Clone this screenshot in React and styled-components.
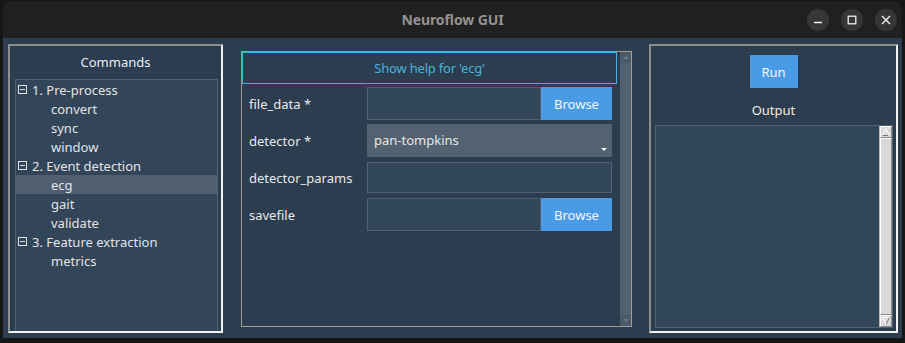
import React from 'react';
import styled, { createGlobalStyle } from 'styled-components';

const Global = createGlobalStyle`
  html, body {
    margin: 0;
    padding: 0;
    background: #161616;
    font-family: 'Noto Sans', 'Open Sans', sans-serif;
  }
`;

const Desktop = styled.div`
  width: 905px;
  height: 343px;
  padding: 1px 3px 0 3px;
  box-sizing: border-box;
  overflow: hidden;
`;

const Window = styled.div`
  width: 899px;
  border-radius: 9px 9px 0 0;
  overflow: hidden;
  background: #1f1f1f;
`;

const TitleBar = styled.div`
  position: relative;
  height: 37px;
  display: flex;
  align-items: center;
  justify-content: center;
  background: #202020;
  color: #939393;
  font-weight: 700;
  font-size: 14px;
  letter-spacing: -0.1px;
`;

const Controls = styled.div`
  position: absolute;
  right: 5px;
  top: 8px;
  display: flex;
  gap: 12px;
`;

const CtlButton = styled.div`
  width: 22px;
  height: 22px;
  border-radius: 50%;
  background: #363636;
  display: flex;
  align-items: center;
  justify-content: center;
`;

const Body = styled.div`
  height: 300px;
  background: #2b3d4f;
  display: flex;
  align-items: flex-start;
  padding: 6px 0 0 5px;
  box-sizing: border-box;
`;

const SidePanel = styled.div`
  width: ${(p) => p.$w}px;
  height: 289px;
  box-sizing: border-box;
  border: 2px solid;
  border-color: #8e8e8e #f2f2f2 #f2f2f2 #8e8e8e;
  display: flex;
  flex-direction: column;
  align-items: ${(p) => (p.$center ? 'center' : 'stretch')};
  margin-right: ${(p) => p.$mr || 0}px;
`;

const PanelTitle = styled.div`
  color: #ececec;
  font-size: 13px;
  text-align: center;
  height: 33px;
  line-height: 33px;
`;

const TreeBox = styled.div`
  flex: 1;
  margin: 0 3px 0 5px;
  background: #324559;
  border: 1px solid #4f6173;
  border-bottom: none;
`;

const TreeRow = styled.div`
  height: 19px;
  display: flex;
  align-items: center;
  padding-left: ${(p) => (p.$child ? 35 : 2)}px;
  background: ${(p) => (p.$selected ? '#4f5f6f' : 'transparent')};
  color: #e4e4e4;
  font-size: 13px;
  white-space: nowrap;
`;

const Expander = styled.span`
  width: 7px;
  height: 7px;
  border: 1px solid #e0e0e0;
  position: relative;
  margin-right: 5px;
  &::after {
    content: '';
    position: absolute;
    left: 1px;
    right: 1px;
    top: 3px;
    height: 1px;
    background: #e0e0e0;
  }
`;

const MiddlePanel = styled.div`
  width: 391px;
  height: 276px;
  margin-top: 7px;
  margin-right: 17px;
  box-sizing: border-box;
  border: 1px solid #a39d93;
  display: flex;
`;

const FormArea = styled.div`
  flex: 1;
  display: flex;
  flex-direction: column;
`;

const HelpButton = styled.div`
  height: 32px;
  margin-right: 3px;
  box-sizing: border-box;
  border: 1px solid #3fb2dc;
  display: flex;
  align-items: center;
  justify-content: center;
  color: #4cb3da;
  font-size: 13px;
  letter-spacing: -0.2px;
`;

const FormRow = styled.div`
  display: flex;
  align-items: center;
  height: ${(p) => p.$h || 33}px;
  margin-top: ${(p) => p.$mt}px;
  padding-left: 7px;
`;

const Label = styled.div`
  width: 118px;
  color: #e9e9e9;
  font-size: 13px;
`;

const Entry = styled.div`
  width: ${(p) => p.$w}px;
  height: 100%;
  box-sizing: border-box;
  background: #32465a;
  border: 1px solid #4f6173;
`;

const BlueButton = styled.div`
  width: ${(p) => p.$w}px;
  height: ${(p) => p.$h || 33}px;
  margin-top: ${(p) => p.$mt || 0}px;
  background: #4a9be6;
  color: #f2f6fb;
  font-size: 13px;
  display: flex;
  align-items: center;
  justify-content: center;
`;

const Combo = styled.div`
  position: relative;
  width: 245px;
  height: 100%;
  background: #536271;
  color: #e6e6e6;
  font-size: 13px;
  display: flex;
  align-items: center;
  padding-left: 7px;
  padding-bottom: 2px;
  box-sizing: border-box;
  &::after {
    content: '';
    position: absolute;
    right: 5px;
    bottom: 6px;
    border-left: 3px solid transparent;
    border-right: 3px solid transparent;
    border-top: 3px solid #f0f0f0;
  }
`;

const DarkScroll = styled.div`
  width: 11px;
  background: #526171;
  display: flex;
  flex-direction: column;
  justify-content: space-between;
`;

const DarkArrow = styled.div`
  height: 11px;
  background: #4b5a69;
  display: flex;
  align-items: center;
  justify-content: center;
  &::after {
    content: '';
    border-left: 3px solid transparent;
    border-right: 3px solid transparent;
    ${(p) => (p.$down ? 'border-top' : 'border-bottom')}: 3px solid #6a7988;
  }
`;

const OutputLabel = styled.div`
  color: #ececec;
  font-size: 13px;
  margin-top: 12px;
  height: 25px;
  line-height: 20px;
`;

const OutputBox = styled.div`
  align-self: stretch;
  flex: 1;
  margin: 0 3px 3px 4px;
  display: flex;
  border: 1px solid #4f6173;
  background: #32465a;
`;

const OutputText = styled.div`
  flex: 1;
`;

const LightScroll = styled.div`
  width: 12px;
  background: #c8c8c8;
  display: flex;
  flex-direction: column;
  border-left: 1px solid #b8b8b8;
`;

const Bevel = styled.div`
  box-sizing: border-box;
  background: #d9d9d9;
  border-top: 1px solid #ffffff;
  border-left: 1px solid #ffffff;
  border-right: 1px solid #8a8a8a;
  border-bottom: 1px solid #8a8a8a;
  display: flex;
  align-items: center;
  justify-content: center;
  height: ${(p) => (p.$grow ? 'auto' : '12px')};
  flex: ${(p) => (p.$grow ? 1 : 'none')};
`;

const tree = [
  { label: '1. Pre-process', group: true },
  { label: 'convert' },
  { label: 'sync' },
  { label: 'window' },
  { label: '2. Event detection', group: true },
  { label: 'ecg', selected: true },
  { label: 'gait' },
  { label: 'validate' },
  { label: '3. Feature extraction', group: true },
  { label: 'metrics' },
];

export default function App() {
  return (
    <>
      <Global />
      <Desktop>
        <Window>
          <TitleBar>
            Neuroflow GUI
            <Controls>
              <CtlButton>
                <svg width="10" height="10" viewBox="0 0 10 10">
                  <path d="M1 7.5h8" stroke="#f0f0f0" strokeWidth="1.4" />
                </svg>
              </CtlButton>
              <CtlButton>
                <svg width="10" height="10" viewBox="0 0 10 10">
                  <rect x="1.2" y="1.2" width="7.6" height="7.6" fill="none" stroke="#f0f0f0" strokeWidth="1.3" />
                </svg>
              </CtlButton>
              <CtlButton>
                <svg width="10" height="10" viewBox="0 0 10 10">
                  <path d="M1 1l8 8M9 1l-8 8" stroke="#f0f0f0" strokeWidth="1.4" />
                </svg>
              </CtlButton>
            </Controls>
          </TitleBar>
          <Body>
            <SidePanel $w={215} $mr={18}>
              <PanelTitle>Commands</PanelTitle>
              <TreeBox>
                {tree.map((t) => (
                  <TreeRow key={t.label} $child={!t.group} $selected={t.selected}>
                    {t.group && <Expander />}
                    {t.label}
                  </TreeRow>
                ))}
              </TreeBox>
            </SidePanel>

            <MiddlePanel>
              <FormArea>
                <HelpButton>Show help for 'ecg'</HelpButton>
                <FormRow $mt={3}>
                  <Label>file_data *</Label>
                  <Entry $w={174} />
                  <BlueButton $w={71}>Browse</BlueButton>
                </FormRow>
                <FormRow $mt={4}>
                  <Label>detector *</Label>
                  <Combo>pan-tompkins</Combo>
                </FormRow>
                <FormRow $mt={5} $h={31}>
                  <Label>detector_params</Label>
                  <Entry $w={245} />
                </FormRow>
                <FormRow $mt={5}>
                  <Label>savefile</Label>
                  <Entry $w={174} />
                  <BlueButton $w={71}>Browse</BlueButton>
                </FormRow>
              </FormArea>
              <DarkScroll>
                <DarkArrow />
                <DarkArrow $down />
              </DarkScroll>
            </MiddlePanel>

            <SidePanel $w={249} $center>
              <BlueButton $w={48} $h={33} $mt={9}>Run</BlueButton>
              <OutputLabel>Output</OutputLabel>
              <OutputBox>
                <OutputText />
                <LightScroll>
                  <Bevel>
                    <svg width="8" height="8" viewBox="0 0 8 8">
                      <path d="M4 0.5L7.5 7.5H0.5Z" fill="#d9d9d9" stroke="#ffffff" strokeWidth="1" />
                      <path d="M4 0.5L7.5 7.5H0.5" fill="none" stroke="#7a7a7a" strokeWidth="1" strokeDasharray="0 8.8 20" />
                    </svg>
                  </Bevel>
                  <Bevel $grow />
                  <Bevel>
                    <svg width="8" height="8" viewBox="0 0 8 8">
                      <path d="M0.5 0.5H7.5L4 7.5Z" fill="#d9d9d9" stroke="#ffffff" strokeWidth="1" />
                      <path d="M7.5 0.5L4 7.5" stroke="#7a7a7a" strokeWidth="1" />
                    </svg>
                  </Bevel>
                </LightScroll>
              </OutputBox>
            </SidePanel>
          </Body>
        </Window>
      </Desktop>
    </>
  );
}
